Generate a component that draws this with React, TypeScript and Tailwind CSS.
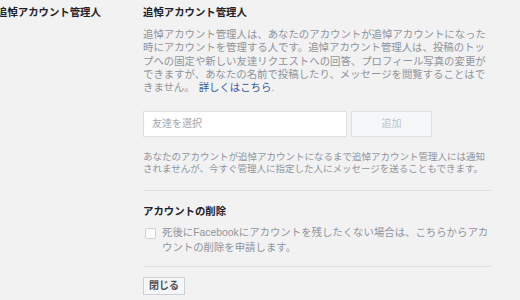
import React from 'react';

const font = { fontFamily: '"Liberation Sans", "Noto Sans CJK JP", sans-serif' };

export default function App() {
    return (
        <div className="flex w-[520px] h-[300px] overflow-hidden bg-[#f2f2f2] text-[#1d2129]" style={font}>
            {/* Left label column */}
            <div className="w-[146px] shrink-0 -ml-[3px] pt-[6px] text-[10.4px] leading-[14px] font-bold">
                追悼アカウント管理人
            </div>

            {/* Right content column */}
            <div className="w-[348px] shrink-0 pt-[6px]">
                <h3 className="text-[10.4px] leading-[14px] font-bold">追悼アカウント管理人</h3>
                <p className="mt-[8px] text-[10.4px] leading-[13.3px] text-[#90949c]">
                    追悼アカウント管理人は、あなたのアカウントが追悼アカウントになった時にアカウントを管理する人です。追悼アカウント管理人は、投稿のトップへの固定や新しい友達リクエストへの回答、プロフィール写真の変更ができますが、あなたの名前で投稿したり、メッセージを閲覧することはできません。
                    <a className="ml-[4px] text-[#365899]">詳しくはこちら</a>.
                </p>

                <div className="mt-[16.5px] flex gap-[4px]">
                    <input
                        className="w-[204px] h-[26px] px-[8px] bg-white border border-[#dddfe2] text-[10px] placeholder:text-[#a3a6ab] outline-none"
                        placeholder="友達を選択"
                    />
                    <button className="w-[81px] h-[26px] bg-[#f6f7f9] border border-[#dddfe2] text-[10px] text-[#bec2c9]">
                        追加
                    </button>
                </div>

                <p className="mt-[14px] text-[9.5px] leading-[12.5px] text-[#90949c]">
                    あなたのアカウントが追悼アカウントになるまで追悼アカウント管理人には通知されませんが、今すぐ管理人に指定した人にメッセージを送ることもできます。
                </p>

                <div className="mt-[14px] border-t border-[#dddfe2]" />

                <h3 className="mt-[14px] text-[10.4px] leading-[14px] font-bold">アカウントの削除</h3>
                <label className="mt-[6px] flex items-start gap-[6px] text-[10.4px] leading-[15px] text-[#90949c]">
                    <span className="mt-[3px] ml-[2px] w-[11px] h-[11px] shrink-0 rounded-[2px] bg-white border border-[#ccd0d5]" />
                    <span>死後にFacebookにアカウントを残したくない場合は、こちらからアカウントの削除を申請します。</span>
                </label>

                <div className="mt-[11px] border-t border-[#dddfe2]" />

                <button className="mt-[10px] w-[42px] h-[18px] bg-[#f6f7f9] border border-[#ced0d4] text-[10px] font-bold text-[#4b4f56] leading-none">
                    閉じる
                </button>
            </div>
        </div>
    );
}
